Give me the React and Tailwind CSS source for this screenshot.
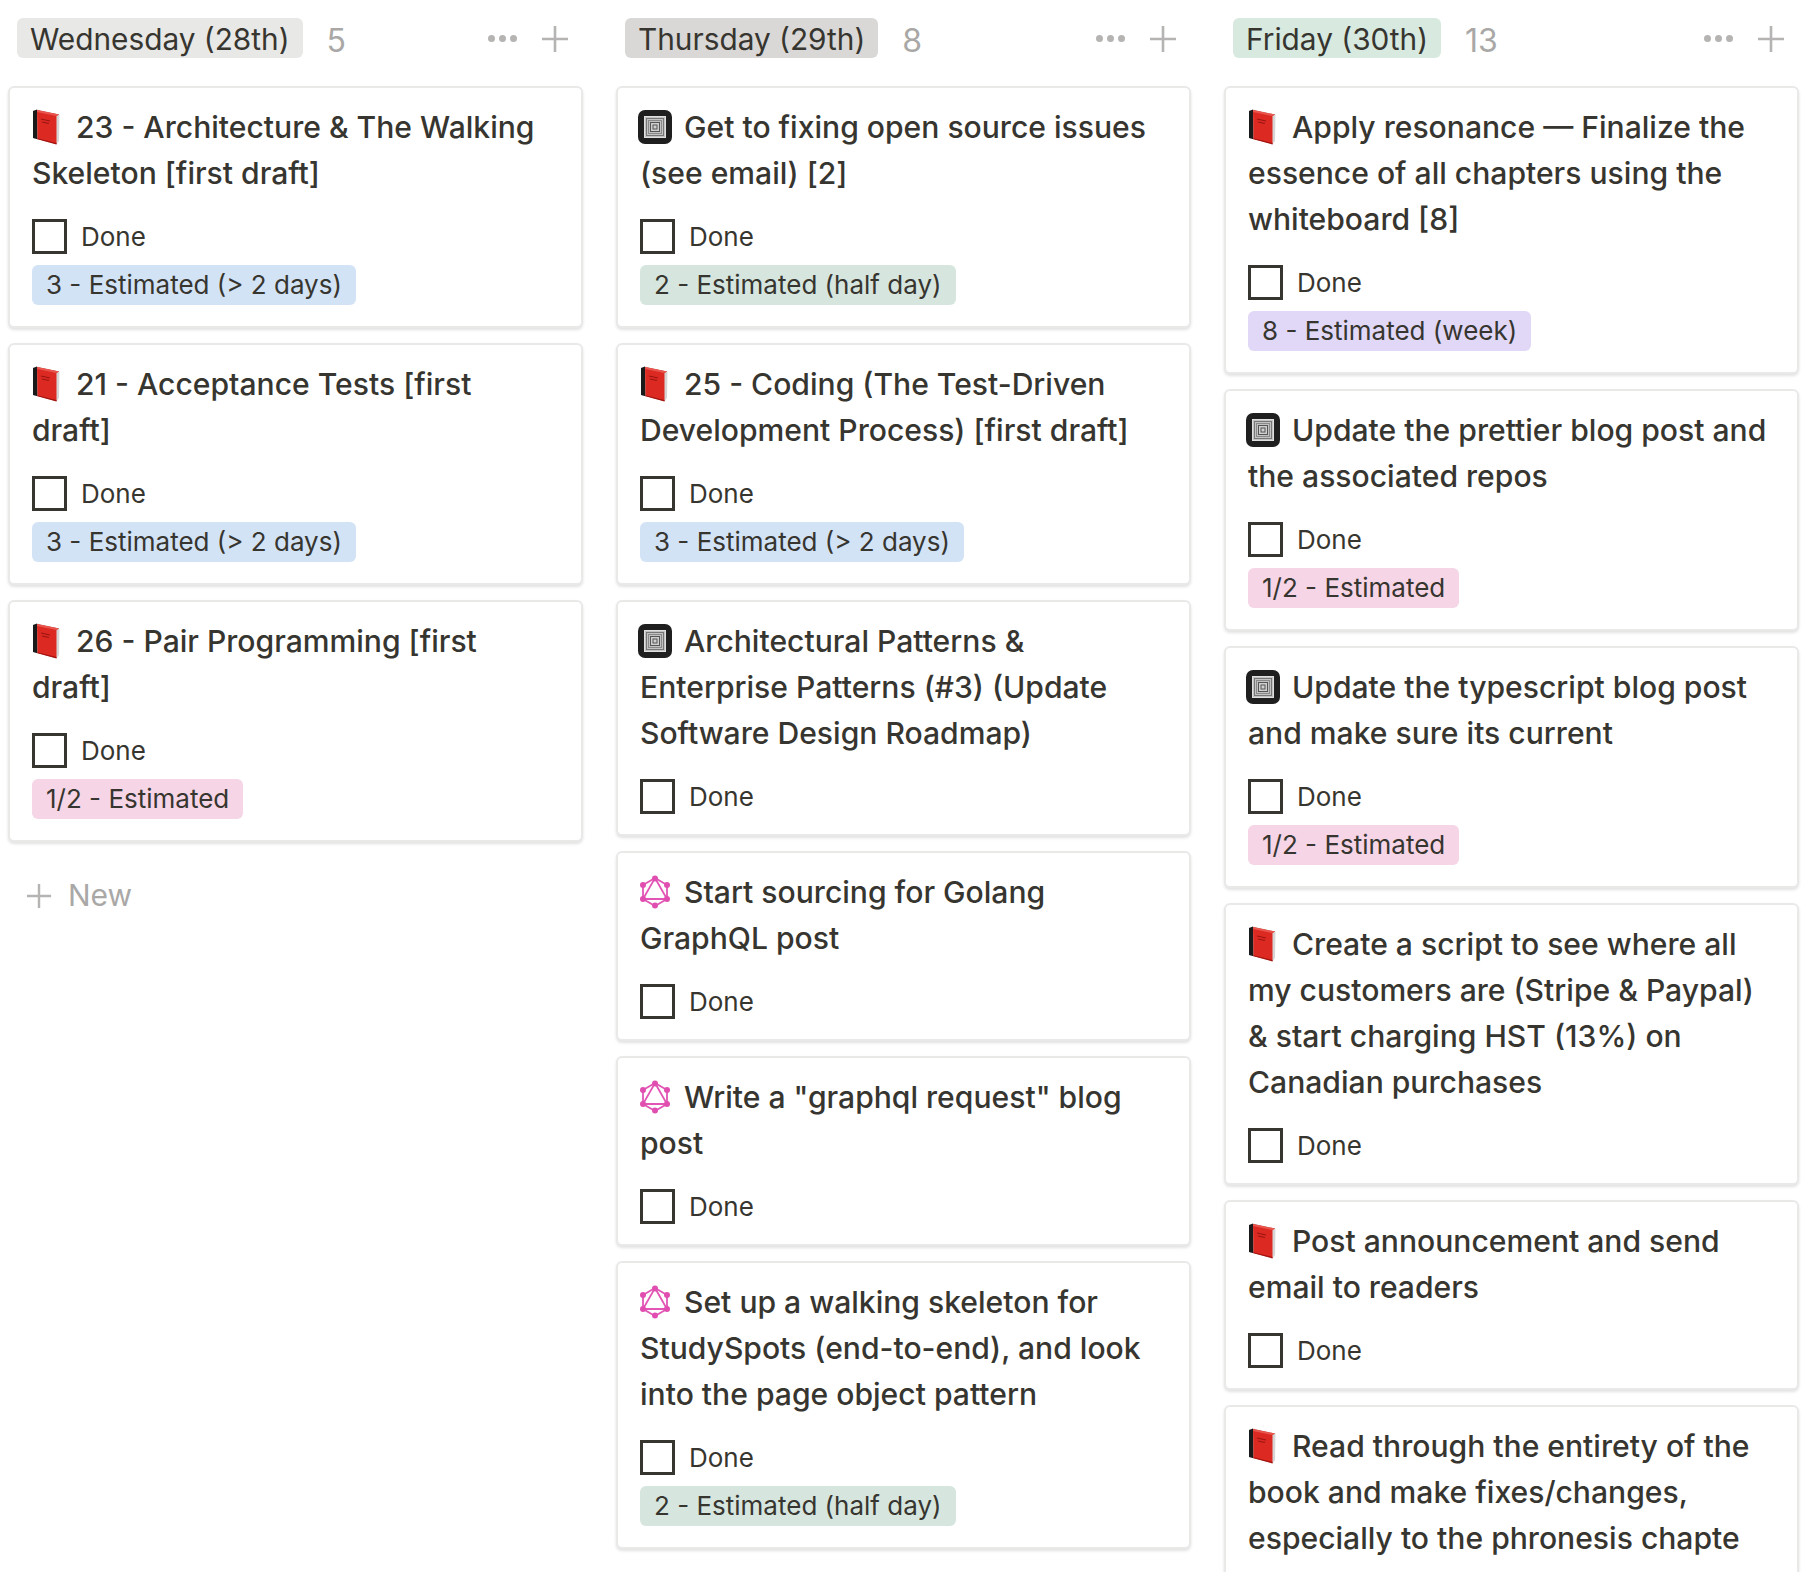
const Book = () => (
  <svg viewBox="0 0 28 36" className="w-[28px] h-[36px] shrink-0">
    <path d="M1 2 L5 0.5 L27.5 5.5 L27 32 L24.5 35.5 L1 29 Z" fill="#d6d6d6" />
    <path d="M1 2 L5 0.5 L5.5 30.2 L1 29 Z" fill="#1a1a1a" />
    <path d="M5 1 L27 5.5 L24.5 7 L24.5 35 L5.5 30 Z" fill="#dc2a22" />
    <path d="M5 1 L27 5.5 L24.5 7 L5 3 Z" fill="#e8564e" />
    <path d="M24.5 35.5 L5.5 30.2 L5.5 29.2 L24.5 34 Z" fill="#a5130f" />
    <path d="M9 10 L18 12 M10 13 L17 14.5" stroke="#9a1512" strokeWidth="1.1" />
  </svg>
);
const Spiral = () => (
  <svg viewBox="0 0 34 34" className="-ml-[2px] w-[34px] h-[34px] shrink-0">
    <rect width="34" height="34" rx="7" fill="#1f1f1f" />
    <rect x="6.5" y="6.5" width="21" height="21" fill="#c2c2c2" stroke="#e0e0e0" />
    <rect x="8.5" y="8.5" width="17" height="17" fill="none" stroke="#777" strokeWidth="1" />
    <rect x="10.5" y="10.5" width="13" height="13" fill="none" stroke="#8a8a8a" strokeWidth="1" />
    <rect x="12.5" y="12.5" width="9" height="9" fill="#cfcfcf" stroke="#555" strokeWidth="1" />
    <rect x="15" y="15" width="4" height="4" fill="none" stroke="#555" strokeWidth="1" />
  </svg>
);
const Graph = () => (
  <svg viewBox="0 0 34 34" className="-ml-[2px] w-[34px] h-[34px] shrink-0">
    <g fill="none" stroke="#e255b5" strokeWidth="1.8">
      <path d="M17 3 L29 10 L29 24 L17 31 L5 24 L5 10 Z" />
      <path d="M17 3 L29 24 L5 24 Z" />
    </g>
    <g fill="#e04fb0">
      <circle cx="17" cy="3.5" r="3" />
      <circle cx="29" cy="10" r="3" />
      <circle cx="29" cy="24" r="3" />
      <circle cx="17" cy="30.5" r="3" />
      <circle cx="5" cy="24" r="3" />
      <circle cx="5" cy="10" r="3" />
    </g>
  </svg>
);
const Plus = ({ className }) => (
  <svg viewBox="0 0 28 28" className={className}>
    <path d="M14 1 V27 M1 14 H27" stroke="#b5b4b2" strokeWidth="2.6" />
  </svg>
);
const icons = { book: Book, spiral: Spiral, graph: Graph };
const tagStyles = {
  blue: "bg-[#d3e3f6]",
  green: "bg-[#d6e6df]",
  purple: "bg-[#e0d8f6]",
  pink: "bg-[#f5d5e6]",
};
const T3 = ["3 - Estimated (> 2 days)", "blue"];
const T2 = ["2 - Estimated (half day)", "green"];
const T8 = ["8 - Estimated (week)", "purple"];
const TH = ["1/2 - Estimated", "pink"];

const columns = [
  {
    name: "Wednesday (28th)", count: "5", pill: "bg-[#e8e8e6]", w: "w-[608px]",
    cards: [
      { icon: "book", lines: ["23 - Architecture & The Walking", "Skeleton [first draft]"], tag: T3 },
      { icon: "book", lines: ["21 - Acceptance Tests [first", "draft]"], tag: T3 },
      { icon: "book", lines: ["26 - Pair Programming [first", "draft]"], tag: TH },
    ],
    add: true,
  },
  {
    name: "Thursday (29th)", count: "8", pill: "bg-[#d9d8d6]", w: "w-[608px]",
    cards: [
      { icon: "spiral", lines: ["Get to fixing open source issues", "(see email) [2]"], tag: T2 },
      { icon: "book", lines: ["25 - Coding (The Test-Driven", "Development Process) [first draft]"], tag: T3 },
      { icon: "spiral", lines: ["Architectural Patterns &", "Enterprise Patterns (#3) (Update", "Software Design Roadmap)"] },
      { icon: "graph", lines: ["Start sourcing for Golang", "GraphQL post"] },
      { icon: "graph", lines: ['Write a "graphql request" blog', "post"] },
      { icon: "graph", lines: ["Set up a walking skeleton for", "StudySpots (end-to-end), and look", "into the page object pattern"], tag: T2 },
    ],
  },
  {
    name: "Friday (30th)", count: "13", pill: "bg-[#d8e9e0]", w: "w-[591px]",
    cards: [
      { icon: "book", lines: ["Apply resonance — Finalize the", "essence of all chapters using the", "whiteboard [8]"], tag: T8 },
      { icon: "spiral", lines: ["Update the prettier blog post and", "the associated repos"], tag: TH },
      { icon: "spiral", lines: ["Update the typescript blog post", "and make sure its current"], tag: TH },
      { icon: "book", lines: ["Create a script to see where all", "my customers are (Stripe & Paypal)", "& start charging HST (13%) on", "Canadian purchases"] },
      { icon: "book", lines: ["Post announcement and send", "email to readers"] },
      { icon: "book", lines: ["Read through the entirety of the", "book and make fixes/changes,", "especially to the phronesis chapte"], clip: true },
    ],
  },
];

function Card({ card }) {
  const Icon = icons[card.icon];
  return (
    <div className={`w-[575px] shrink-0 rounded-[6px] bg-white border-2 border-[#e9e9e8] shadow-[0_2px_3px_rgba(15,15,15,0.12)] px-[22px] pt-[16px] ${card.clip ? "pb-[120px]" : card.tag ? "pb-[21px]" : "pb-[18px]"}`}>
      <div className="text-[30.1px] leading-[46px] font-medium text-[#37352f] whitespace-nowrap">
        {card.lines.map((l, i) => (
          <div key={i} className="flex items-center">
            {i === 0 && (
              <span className="w-[44px] shrink-0">
                <Icon />
              </span>
            )}
            {l}
          </div>
        ))}
      </div>
      {!card.clip && (
        <div className="mt-[20px]">
          <div className="flex items-center gap-[14px] h-[40px]">
            <span className="w-[35px] h-[35px] border-[3px] border-[#37352f]" />
            <span className="text-[26px] text-[#37352f]">Done</span>
          </div>
          {card.tag && (
            <div className={`mt-[9px] inline-block align-top h-[40px] leading-[40px] rounded-[6px] px-[14px] text-[26px] text-[#37352f] ${tagStyles[card.tag[1]]}`}>
              {card.tag[0]}
            </div>
          )}
        </div>
      )}
    </div>
  );
}

export default function App() {
  return (
    <div className="h-[1572px] w-[1816px] overflow-hidden bg-white flex pl-[8px] pt-[18px] font-['Inter',sans-serif]">
      {columns.map((c) => (
        <div key={c.name} className={`${c.w} shrink-0 flex flex-col`}>
          <div className="w-[575px] h-[40px] mb-[28px] flex items-center pl-[9px] pr-[14px]">
            <div className={`h-[40px] leading-[42px] rounded-[6px] px-[13px] text-[29.8px] text-[#37352f] whitespace-nowrap ${c.pill}`}>{c.name}</div>
            <div className="ml-[24px] mt-[5px] text-[32px] text-[#a9a8a6]">{c.count}</div>
            <div className="ml-auto mt-[1px] flex items-center gap-[24px]">
              <div className="flex gap-[4px]">
                <span className="w-[7px] h-[7px] rounded-full bg-[#b5b4b2]" />
                <span className="w-[7px] h-[7px] rounded-full bg-[#b5b4b2]" />
                <span className="w-[7px] h-[7px] rounded-full bg-[#b5b4b2]" />
              </div>
              <Plus className="w-[28px] h-[28px]" />
            </div>
          </div>
          <div className="flex flex-col gap-[15px]">
            {c.cards.map((card, i) => <Card key={i} card={card} />)}
            {c.add && (
              <div className="flex items-center gap-[16px] pl-[18px] pt-[16px] text-[30px] text-[#a9a8a6]">
                <Plus className="w-[26px] h-[26px]" />
                New
              </div>
            )}
          </div>
        </div>
      ))}
    </div>
  );
}
